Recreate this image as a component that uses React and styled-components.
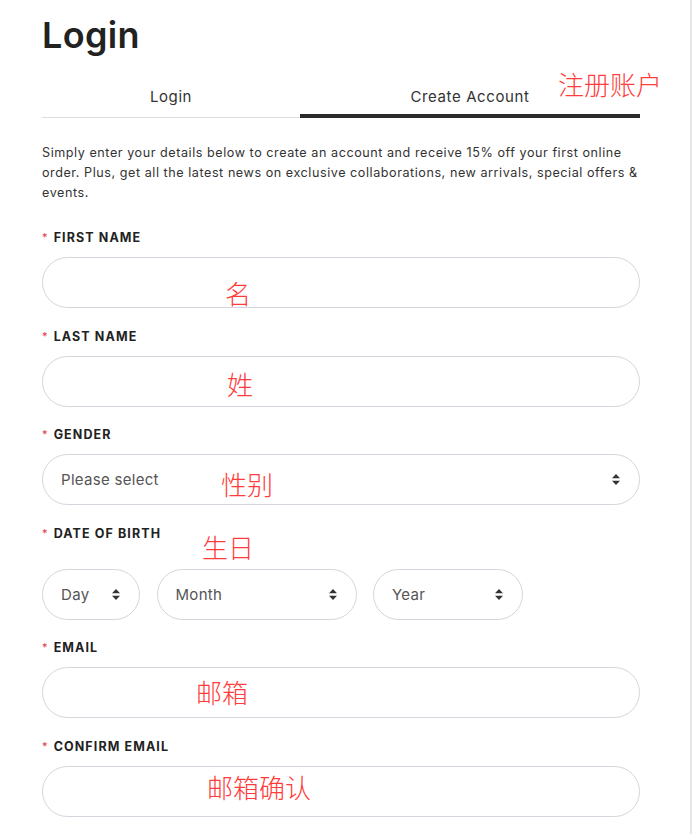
import React from 'react'
import styled, { createGlobalStyle } from 'styled-components'

const GlobalStyle = createGlobalStyle`
    body {
        margin: 0;
        background: #fff;
        font-family: Inter, "Noto Sans", sans-serif;
        color: #222;
    }
`

const fields = [
    { key: 'first', label: 'First name', note: '名', noteAt: [225, 280] },
    { key: 'last', label: 'Last name', note: '姓', noteAt: [227, 371] },
]

const emails = [
    { key: 'email', label: 'Email', note: '邮箱', noteAt: [196, 679] },
    { key: 'confirm', label: 'Confirm email', note: '邮箱确认', noteAt: [207, 774] },
]

const Arrows = () => (
    <svg width="8" height="11" viewBox="0 0 8 11">
        <path d="M4 0 L8 4.2 H0 Z M4 11 L0 6.8 H8 Z" fill="#333" />
    </svg>
)

const Field = ({label, children, wide}) => (
    <FieldBox>
        <Label><Star>*</Star>{label}</Label>
        <Control wide={wide}>{children}</Control>
    </FieldBox>
)

const App = () => (
    <Page>
        <GlobalStyle />
        <Title>Login</Title>
        <Tabs>
            <Tab width="258px">Login</Tab>
            <Tab width="340px" active>Create Account</Tab>
        </Tabs>
        <Intro>
            Simply enter your details below to create an account and receive 15% off your first online
            order. Plus, get all the latest news on exclusive collaborations, new arrivals, special offers &amp;
            events.
        </Intro>
        <Form>
            {fields.map((f) => (
                <Field key={f.key} label={f.label}><TextInput type="text" /></Field>
            ))}
            <Field label="Gender">
                <Select width="598px"><span>Please select</span><Arrows /></Select>
            </Field>
            <Field label="Date of birth" wide>
                <DateRow>
                    <Select width="98px"><span>Day</span><Arrows /></Select>
                    <Select width="200px"><span>Month</span><Arrows /></Select>
                    <Select width="150px"><span>Year</span><Arrows /></Select>
                </DateRow>
            </Field>
            {emails.map((f) => (
                <Field key={f.key} label={f.label}><TextInput type="email" /></Field>
            ))}
        </Form>

        <Note style={{left: 558, top: 71}}>注册账户</Note>
        {[...fields, ...emails].map((f) => (
            <Note key={f.key} style={{left: f.noteAt[0], top: f.noteAt[1]}}>{f.note}</Note>
        ))}
        <Note style={{left: 221, top: 471}}>性别</Note>
        <Note style={{left: 202, top: 534}}>生日</Note>
    </Page>
)

const Page = styled.div`
    position: relative;
    box-sizing: border-box;
    width: 692px;
    min-height: 834px;
    padding: 0 50px 20px 42px;
    border-right: 2px solid #e6e6e6;
`

const Title = styled.h1`
    margin: 0;
    padding-top: 14px;
    font-size: 36px;
    line-height: 43px;
    font-weight: 600;
    color: #222;
    letter-spacing: 0.3px;
`

const Tabs = styled.div`
    display: flex;
    align-items: flex-end;
    margin-top: 30px;
`

const Tab = styled.div`
    width: ${(p) => p.width};
    text-align: center;
    font-size: 15px;
    line-height: 20px;
    color: #333;
    letter-spacing: 0.6px;
    padding-bottom: ${(p) => (p.active ? '7px' : '10px')};
    border-bottom: ${(p) => (p.active ? '4px solid #2a2a2a' : '1px solid #dedede')};
`

const Intro = styled.p`
    margin: 25px 0 0;
    font-size: 12.6px;
    line-height: 20px;
    color: #333;
    letter-spacing: 0.55px;
`

const Form = styled.div`
    display: flex;
    flex-direction: column;
    gap: 18.5px;
    margin-top: 25px;
`

const FieldBox = styled.div`
    display: flex;
    flex-direction: column;
`

const Label = styled.div`
    font-size: 12.5px;
    line-height: 20px;
    font-weight: 700;
    text-transform: uppercase;
    letter-spacing: 1.1px;
    color: #222;
`

const Star = styled.span`
    color: #e0364a;
    font-weight: 400;
    font-size: 11px;
    margin-right: 5px;
    position: relative;
    top: -1px;
`

const Control = styled.div`
    margin-top: ${(p) => (p.wide ? '25px' : '9px')};
`

const TextInput = styled.input`
    box-sizing: border-box;
    display: block;
    width: 598px;
    height: 51px;
    border: 1px solid #d3d6dc;
    border-radius: 26px;
    padding: 0 18px;
    font-size: 15px;
    outline: none;
`

const Select = styled.div`
    box-sizing: border-box;
    display: flex;
    align-items: center;
    justify-content: space-between;
    width: ${(p) => p.width};
    height: 51px;
    padding: 0 19px 0 18px;
    border: 1px solid #d3d6dc;
    border-radius: 26px;
    font-size: 15px;
    color: #555;
    letter-spacing: 0.3px;
`

const DateRow = styled.div`
    display: flex;
    gap: 16.5px;
`

const Note = styled.div`
    position: absolute;
    font-family: "Noto Sans CJK SC", sans-serif;
    font-weight: 300;
    font-size: 26px;
    line-height: 1;
    color: #ff3b3b;
    white-space: nowrap;
`

export default App
